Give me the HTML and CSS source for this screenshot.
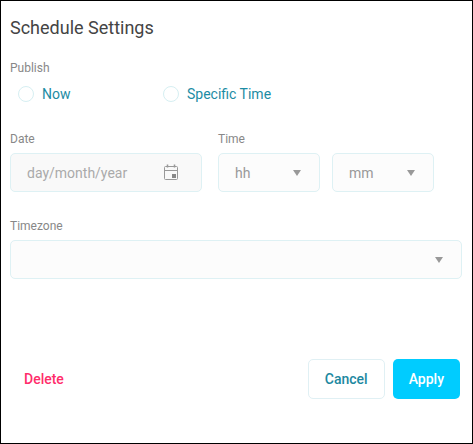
FILE: index.html
```html
<!DOCTYPE html>
<html lang="en">

<head>
    <meta charset="UTF-8">
    <meta name="viewport" content="width=device-width, initial-scale=1.0">
    <title>Schedule Settings</title>
    <link rel="stylesheet" href="styles.css">
</head>

<body>
    <form class="schedule">
        <h1>Schedule Settings</h1>

        <fieldset class="publish">
            <legend>Publish</legend>
            <div class="radio-row">
                <label class="radio"><input type="radio" name="publish" value="now">Now</label>
                <label class="radio"><input type="radio" name="publish" value="specific">Specific Time</label>
            </div>
        </fieldset>

        <div class="when">
            <div class="field">
                <label for="date">Date</label>
                <div class="control control-date">
                    <input type="text" id="date" name="date" placeholder="day/month/year">
                    <button type="button" class="btn-calendar" aria-label="Open calendar">
                        <svg width="16" height="17" viewBox="0 0 16 17" fill="none" stroke="#999" stroke-width="1">
                            <rect x="1.5" y="2.5" width="13" height="13" rx="1" />
                            <path d="M1.5 6.5h13" />
                            <path d="M4.5 .5v3M11.5 .5v3" stroke-width="1.5" />
                            <rect x="9" y="10" width="4" height="4" fill="#888" stroke="none" />
                        </svg>
                    </button>
                </div>
            </div>

            <div class="field">
                <label for="hours">Time</label>
                <div class="control">
                    <select id="hours" name="hours">
                        <option value="">hh</option>
                        <option>09</option>
                        <option>12</option>
                        <option>18</option>
                    </select>
                    <svg class="arrow" width="8" height="6" viewBox="0 0 8 6"><path d="M0 0h8L4 6z" /></svg>
                </div>
            </div>

            <div class="field">
                <div class="control">
                    <select id="minutes" name="minutes" aria-label="Minutes">
                        <option value="">mm</option>
                        <option>00</option>
                        <option>15</option>
                        <option>30</option>
                        <option>45</option>
                    </select>
                    <svg class="arrow" width="8" height="6" viewBox="0 0 8 6"><path d="M0 0h8L4 6z" /></svg>
                </div>
            </div>
        </div>

        <div class="field timezone">
            <label for="timezone">Timezone</label>
            <div class="control">
                <select id="timezone" name="timezone">
                    <option value=""></option>
                    <option>UTC</option>
                </select>
                <svg class="arrow" width="8" height="6" viewBox="0 0 8 6"><path d="M0 0h8L4 6z" /></svg>
            </div>
        </div>

        <div class="actions">
            <button type="button" class="btn btn-delete">Delete</button>
            <button type="button" class="btn btn-cancel">Cancel</button>
            <button type="submit" class="btn btn-apply">Apply</button>
        </div>
    </form>
</body>

</html>
```

FILE: styles.css
```css
* {
    box-sizing: border-box;
}

body {
    margin: 0;
    font-family: Roboto, "Liberation Sans", sans-serif;
    color: #444;
    background: #fff;
}

input,
select,
button {
    font-family: inherit;
    font-size: 14px;
}

.schedule {
    min-height: 100vh;
    padding: 15px 10px 40px 9px;
    border: 1px solid #000;
}

h1 {
    margin: 0 0 20px;
    font-size: 18px;
    line-height: 24px;
    font-weight: 400;
}

.publish {
    margin: 0 0 27px;
    padding: 0;
    border: none;
}

.publish legend,
.field label {
    display: block;
    padding: 0;
    font-size: 12px;
    line-height: 16px;
    color: #888;
}

.radio-row {
    display: flex;
    padding: 8px 8px 0;
}

.radio {
    display: flex;
    align-items: center;
    gap: 8px;
    min-width: 145px;
    font-size: 14px;
    line-height: 20px;
    color: #1c8ca4;
}

.radio input {
    appearance: none;
    width: 16px;
    height: 16px;
    margin: 0;
    border: 1px solid #d6eff2;
    border-radius: 50%;
}

.radio input:checked {
    border: 5px solid #00ccff;
}

.when {
    display: grid;
    grid-template-columns: minmax(0, 196fr) minmax(0, 102fr) minmax(0, 102fr);
    column-gap: 12px;
    align-items: end;
    margin: 0 28px 26px 0;
}

.control-date {
    margin-right: 4px;
}

.control {
    position: relative;
    display: flex;
    align-items: center;
    height: 39px;
    margin-top: 6px;
    border: 1px solid #def1f4;
    border-radius: 5px;
    background: #fcfcfc;
}

.control input,
.control select {
    flex: 1;
    min-width: 0;
    height: 100%;
    padding: 0 16px;
    border: none;
    border-radius: 5px;
    appearance: none;
    background: transparent;
    color: #999;
}

.control-date {
    background: #f9f9f9;
}

.control input::placeholder {
    color: #aaa;
}

.btn-calendar {
    display: flex;
    padding: 0;
    margin-right: 22px;
    border: none;
    background: none;
    cursor: pointer;
}

.arrow {
    position: absolute;
    right: 18px;
    fill: #999;
    pointer-events: none;
}

.actions {
    display: flex;
    gap: 8px;
    margin: 80px 2px 0 0;
}

.btn {
    height: 40px;
    padding: 0 16px;
    border: none;
    border-radius: 5px;
    font-weight: 500;
    background: #fff;
    cursor: pointer;
}

.btn-delete {
    padding: 0 14px;
    margin-right: auto;
    color: #ff2d6b;
}

.btn-cancel {
    border: 1px solid #e0f0f4;
    color: #1c88a0;
}

.btn-apply {
    background: #00ccff;
    color: #fff;
}
```
